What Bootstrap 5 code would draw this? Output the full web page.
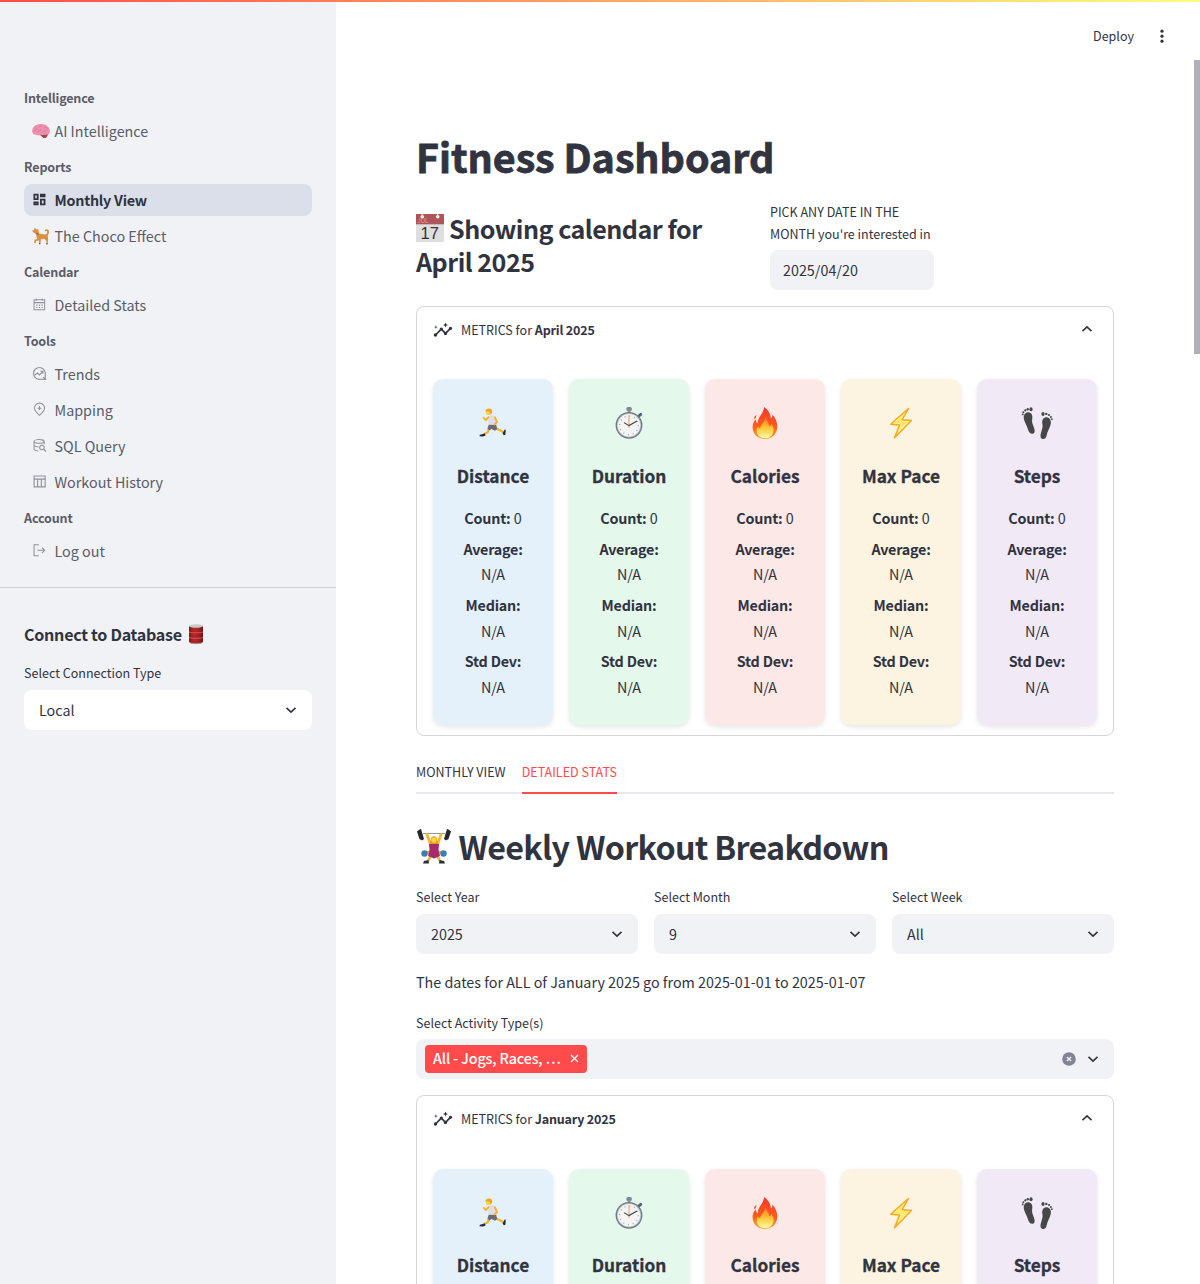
<!DOCTYPE html>
<html lang="en">
<head>
<meta charset="utf-8">
<meta name="viewport" content="width=device-width, initial-scale=1">
<title>Fitness Dashboard</title>
<link href="https://cdn.jsdelivr.net/npm/bootstrap@5.3.0/dist/css/bootstrap.min.css" rel="stylesheet">
<style>
:root{--ink:#31333f;--soft:#f0f2f6;--red:#ff4b4b}
html,body{height:100%;overflow:hidden}
body{font-family:"Noto Sans CJK SC","Noto Sans",sans-serif;color:var(--ink);font-size:14.33px;line-height:25.6px;background:#fff}
h1,h2,h3,h4,p{margin:0}
.topline{height:2px;background:linear-gradient(90deg,#ff4b4b,#fffd80);z-index:5}
.app{height:1284px}
.side{width:336px;background:var(--soft);padding-top:78px}
.side .sect{height:37px;line-height:33px;padding:3px 24px 0;font-size:12.54px;font-weight:600;color:#5a5c67;letter-spacing:-.15px}
.side .nav-link{height:32px;margin:0 24px;padding:0 8px;border-radius:8px;color:#5a5c67;line-height:30px}
.side .nav-link+.nav-link{margin-top:4px}
.side .nav-link.active{background:#dadfea;color:var(--ink);font-weight:600;letter-spacing:-.25px}
.side .nav-link svg{width:15px;height:15px;margin:-1px 7.5px 0 0;color:#8f919b;flex:none}
.side .nav-link.active svg{color:var(--ink)}
.side .nav-link svg.emo{width:18px;height:18px;margin:0 4.5px 0 0}
.rule{height:1px;background:#cbccd2;margin-top:20px}
.dbhead{font-size:16.1px;font-weight:600;line-height:28px;margin-top:32px;letter-spacing:-.28px}
.dbhead svg{margin-left:6px}
.lbl{font-size:12.54px;line-height:22px;display:block}
.conn{margin:14px 0 6px}
.field{height:40px;border-radius:8px;background:var(--soft);padding:0 14px 0 15px;line-height:37px}
.field>span{margin-top:-1px}
.chev{width:14px;height:14px;flex:none}
.up{transform:rotate(180deg);margin-top:-1px}
.main{width:864px;padding:0 86px 0 80px}
.tools{height:60px;padding-top:25px;margin-right:-60px;font-size:12.54px;line-height:22px}
.tools svg{margin-top:-1px}
.title{font-size:39.4px;font-weight:700;line-height:53px;margin-top:69px;-webkit-text-stroke:.8px var(--ink);letter-spacing:-.02px}
.daterow{height:104px;margin-top:20px}
.sub{width:354px;padding-top:10px;font-size:25.07px;font-weight:600;line-height:33.3px;letter-spacing:-.5px}
.cal{width:28px;height:28px;margin-right:5px;vertical-align:-3px;letter-spacing:0}
.picker{width:180px;margin-top:-1px}
.datebox{width:164px;margin-top:5px;padding-left:13px;line-height:40px}
.panel{border:1px solid #d6d6d9;border-radius:8px;height:430px}
.panel-head{height:45px;padding:0 19px 0 16px;font-size:12.54px}
.panel-head b{font-weight:600;letter-spacing:-.2px}
.ins{width:20px;height:20px;margin-right:8px}
.metrics{padding:27px 16px 0;gap:16px}
.metric{flex:1 1 0;height:346px;border-radius:10px;box-shadow:0 2px 5px rgba(0,0,0,.1);text-align:center;padding:26px 15px 0}
.metric svg{width:36px;height:36px;display:block;margin:0 auto}
.metric h4{font-size:17.25px;font-weight:700;line-height:30px;margin:20px -10px 14.2px;-webkit-text-stroke:.3px var(--ink)}
.metric p{margin-bottom:5px}
.metric b{font-weight:600;letter-spacing:-.22px}
.m1{background:#e4f1fa}.m2{background:#e4f8eb}.m3{background:#fce8e7}.m4{background:#fcf3e0}.m5{background:#f2e9f7}
.tabrow{height:42px;border-bottom:2px solid #e6e7ea;gap:16px;margin-top:16px;font-size:12.54px;line-height:40px}
.tabrow a{color:var(--ink);text-decoration:none;height:42px;white-space:nowrap}
.tabrow a.on{color:var(--red);border-bottom:2px solid var(--red)}
.week{font-size:32.24px;font-weight:600;line-height:43px;margin-top:31px;letter-spacing:-.7px}
.lift{width:36px;height:36px;margin:-2px 6.5px 0 0}
.pick{margin:18px 0 6px}
.range{margin-top:15px}
.act{margin:17px 0 5px}
.multi{padding-left:9px}
.chip{background:var(--red);color:#fff;height:28px;border-radius:4px;padding:0 8px;line-height:26px;width:162px;font-weight:500;letter-spacing:-.15px}
.chip span{margin-top:-2px}
.drop{margin-left:10px}
.second{margin-top:16px}
.second .panel-head{height:46px}
.second .metric h4{margin-top:19px}
.thumb{right:0;top:60px;width:6px;height:294px;background:#b0b0b6}
</style>
<script src="https://cdn.jsdelivr.net/npm/bootstrap@5.3.0/dist/js/bootstrap.bundle.min.js"></script>
</head>
<body>
<svg class="position-absolute" width="0" height="0" xmlns="http://www.w3.org/2000/svg">
<defs>
<linearGradient id="gFire" x1="0" y1="0" x2="0" y2="1"><stop offset="0" stop-color="#f5372a"/><stop offset=".6" stop-color="#ff5a1c"/><stop offset="1" stop-color="#ffa61f"/></linearGradient>
<linearGradient id="gCore" x1="0" y1="0" x2="0" y2="1"><stop offset="0" stop-color="#ff7a1e"/><stop offset=".55" stop-color="#ffc93a"/><stop offset="1" stop-color="#fffbb0"/></linearGradient>
<linearGradient id="gCan" x1="0" x2="1" y1="0" y2="0"><stop offset="0" stop-color="#7d1a1c"/><stop offset=".35" stop-color="#b92629"/><stop offset=".7" stop-color="#a91f22"/><stop offset="1" stop-color="#6c1517"/></linearGradient>
</defs>
<symbol id="chev" viewBox="0 0 14 14"><path d="M2.500 4.900 7 9.100l4.500-4.200" fill="none" stroke="#31333f" stroke-width="1.600"/></symbol>
<symbol id="ins" viewBox="0 0 24 24"><path fill="#31333f" d="M21 8c-1.450 0-2.260 1.440-1.930 2.510l-3.550 3.560c-.3-.09-.74-.09-1.040 0l-2.550-2.550C12.270 10.450 11.460 9 10 9c-1.450 0-2.270 1.440-1.930 2.520l-4.560 4.550C2.440 15.740 1 16.550 1 18c0 1.100.9 2 2 2 1.450 0 2.260-1.440 1.930-2.510l4.550-4.560c.3.09.74.09 1.040 0l2.550 2.550C12.730 16.550 13.540 18 15 18c1.450 0 2.270-1.440 1.930-2.520l3.560-3.550C21.560 12.260 23 11.450 23 10c0-1.100-.9-2-2-2zM15 9l.94-2.070L18 6l-2.060-.93L15 3l-.92 2.070L12 6l2.080.93zM3.500 11 4 9l2-.5L4 8l-.5-2L3 8l-2 .5L3 9z"/></symbol>
<symbol id="run" viewBox="0 0 36 36">
<path d="M20 23l5.500 2.500 3 1.700" stroke="#f5b325" stroke-width="2.300" fill="none"/><path d="M14.500 22.500l-2 5-4.500 1.900" stroke="#f5b325" stroke-width="2.200" fill="none"/>
<path d="M27.600 28.500l2.100-4 1 .3-.3 5-1.600.5z" fill="#1f2547"/><path d="M4.400 31.300l.6-1.500 5-1.400.5 2.200-2.500.9z" fill="#1f2547"/>
<path d="M14 19h7l1.200 5-2.200 1.700-3.600-1.700-2 1.500-2-2z" fill="#6b6b73"/>
<path d="M13.600 11.200l4.400-1.300 3 2 .4 8-8.200-.2z" fill="#dcdde6"/>
<path d="M13.400 12.200l-2.400 2.900-2.300-2.300" stroke="#f5b325" stroke-width="1.900" fill="none" stroke-linecap="round"/><path d="M19.900 12.300l2.200 4.700-2.600 2.400" stroke="#f5b325" stroke-width="1.900" fill="none" stroke-linecap="round"/>
<circle cx="13.600" cy="7.400" r="2.700" fill="#ffd04a"/><path d="M10.200 6.200c.3-3 6.500-4 7-.3.200 1.800-.8 2.900-1.700 3.500l-1-3z" fill="#f0a51b"/>
</symbol>
<symbol id="watch" viewBox="0 0 36 36">
<rect x="15.400" y="2" width="5.400" height="4" rx="1.500" fill="#808893"/><path d="M28 10.800l1.800-1.500" stroke="#56606b" stroke-width="2.800" stroke-linecap="round"/>
<rect x="16.600" y="5" width="3" height="4" fill="#8b939c"/>
<circle cx="18" cy="20.300" r="13.400" fill="#717b86"/><circle cx="18" cy="20.300" r="12.100" fill="#b9c0c6"/><circle cx="18" cy="20.300" r="11.200" fill="#f4f4f2"/>
<circle cx="18" cy="20.300" r="9.300" fill="none" stroke="#a5abb0" stroke-width="1.400" stroke-dasharray="1 3.870"/>
<path d="M18 23V10" stroke="#f2a07e" stroke-width="1.100"/><path d="M13 17.600l5 3 8-4.600" stroke="#3d4247" stroke-width="1.100" fill="none"/>
</symbol>
<symbol id="fire" viewBox="0 0 36 36">
<path fill="url(#gFire)" d="M17.300 2c4 3 6.500 7 6.600 11.500 1.200-1 1.700-2.300 1.500-4 3 3.200 5.100 8 4.900 12.500C30 29 25 34 18 34S5.800 29 5.600 22.500c-.1-3.200 1-6 3-8.300.2 2 .9 3.300 2.100 4.200C10.500 12 16 9.500 17.300 2z"/>
<path fill="url(#gCore)" d="M18.500 12c1 4 3.500 6 4 9.500.8-.6 1.500-1.500 1.700-2.500 1.700 2 2.600 4.200 2.300 7-.5 4.500-3.900 7.300-8.500 7.300-4.700 0-8.200-3-8.400-7.300 0-1.800.5-3.500 1.400-4.800.5 1.200 1.200 2 2.100 2.400C13 19 18 17.500 18.500 12z"/>
<path d="M7.500 14.300c-.7-1.500-.3-3 1.800-4.300-.1 1.600-.3 3.200-1.800 4.300z" fill="#f5472a"/>
</symbol>
<symbol id="bolt" viewBox="0 0 36 36"><path d="M25.500 3.500 7.700 19.300l8.900.8-5.100 12.600 16.900-17.300-9.400-.6z" fill="#fff3a0" stroke="#fba919" stroke-width="1.500" stroke-linejoin="round"/><path d="M21.500 9 11 18l8 .9-3.700 7 9.500-9.500-8-.9z" fill="#ffe96d"/></symbol>
<symbol id="feet" viewBox="0 0 36 36"><g fill="#474747">
<path d="M4.800 11c.5-2.800 3.300-4.500 5.700-3.600 2.800 1 3.200 4 2.700 6.500-.6 3 .3 5 1.700 8.500 1.300 3.300 1 5.800-1 6.300-2.100.5-3.900-1-5-4.500C7.600 19.500 4.200 15.500 4.800 11z"/><ellipse cx="12" cy="4.200" rx="1.600" ry="2"/><circle cx="8.700" cy="4.200" r="1.200"/><circle cx="6.300" cy="5.400" r="1.100"/><circle cx="4.300" cy="7.200" r="1"/><circle cx="3.700" cy="9.400" r=".9"/>
<path d="M31.800 16.200c-.5-2.800-3.300-4.500-5.700-3.600-2.800 1-3.200 4-2.700 6.500.6 3-.3 5-1.300 8.400-1 3.300-.8 5.900 1.400 6.400 2.400.5 3.600-1 4.400-4.500 1.200-4.700 4.500-8.700 3.900-12.800z"/><ellipse cx="24" cy="9" rx="1.600" ry="2"/><circle cx="27.300" cy="8.900" r="1.200"/><circle cx="30" cy="10" r="1.100"/><circle cx="31.900" cy="11.900" r="1"/><circle cx="32.800" cy="14.200" r=".9"/></g></symbol>
</svg>

<div class="topline position-absolute top-0 start-0 w-100"></div>
<div class="app d-flex overflow-hidden">
<aside class="side flex-shrink-0">
  <nav class="d-flex flex-column">
    <div class="sect">Intelligence</div>
    <a class="nav-link d-flex align-items-center"><svg class="emo" viewBox="0 0 18 18"><path d="M.2 9.700C-.1 5.700 3 2.200 8.500 2c5-.2 9.500 2.700 9.400 6.900-.1 3-2 4-3.700 4.300l-.8 2.600-2.200-.5-2.200-2.300c-3 .7-8.400-.1-8.800-3.300z" fill="#ef8fae"/><path d="M7.800 12.800l3.200.3 5.200-.6-2.200 3.400-2.700.1z" fill="#a04a4c"/><path d="M2 8.500c2-.2 2.500-1.500 2-3M5.500 9.600c1.500-1.500 3.500-1 4-3M7 4.500c1.500.2 2.500-.3 3-1.500M10.500 10c2-.2 2.500-1.500 4-1.200M12 5.200c1 .8 2.500.5 3.700 1.300" stroke="#d46f93" fill="none" stroke-width=".7"/></svg>AI Intelligence</a>
    <div class="sect">Reports</div>
    <a class="nav-link active d-flex align-items-center"><svg viewBox="0 0 16 16"><path fill="none" stroke="currentColor" stroke-width="1.900" d="M2.500 2.800h3.600v4.800H2.500zM9.500 2.800h3.900v1.900H9.500zM2.500 11h3.600v2.100H2.500zM9.500 8.200h3.900v4.900H9.500z"/></svg>Monthly View</a>
    <a class="nav-link d-flex align-items-center"><svg class="emo" viewBox="0 0 18 18"><path d="M2.500.6l1.700 1.600h2l.8 4.300 6.200 1c1-.2 2-1 2-2.800-.1-1.200-1.400-1.300-1.700-.5l-.9-.5C13.200 1.500 17 1.800 17 4.700c0 1.500-.5 2.500-1.200 3.500l.3 4.500-.4 4.800h-1.600l.4-3.600-2-2-3.500.3-.6 5.300H6.800l.3-4-3 .6-.7 2.300-1.300-.3.400-3.400 2.600-.8L3.900 7 .4 4.800.6 3.500l1.700-.7z" fill="#d79343"/><path d="M4.500 6.300l2 1" stroke="#a33"/><path d="M7 16.500h1.200M14.200 16.700h1.300" stroke="#7a5730"/></svg>The Choco Effect</a>
    <div class="sect">Calendar</div>
    <a class="nav-link d-flex align-items-center"><svg viewBox="0 0 16 16" fill="none" stroke="currentColor" stroke-width="1.100"><path d="M2.200 3h11.300v10.700H2.200zM2.200 6h11.300M4.700 1.500V4M11 1.500V4"/><path d="M4.500 8.600h7M4.500 11.200h7" stroke-dasharray="1.400 1.400" stroke-width="1.200"/></svg>Detailed Stats</a>
    <div class="sect">Tools</div>
    <a class="nav-link d-flex align-items-center"><svg viewBox="0 0 16 16" fill="none" stroke="currentColor" stroke-width="1.200"><path d="M14.200 14.200V8A6.300 6.300 0 1 0 8 14.200h6.200l-2.300-2.400"/><path d="M2.500 10l3.200-2.500 2.300 2 3.500-3.500M8.900 5.600h2.700v2.700"/></svg>Trends</a>
    <a class="nav-link d-flex align-items-center"><svg viewBox="0 0 16 16" fill="none" stroke="currentColor" stroke-width="1.100"><path d="M8 14.200C4.800 11.300 2.600 9 2.600 6.600a5.400 5.400 0 0 1 10.800 0c0 2.400-2.200 4.700-5.400 7.600zM8 4.300v4.600M5.700 6.600h4.600"/></svg>Mapping</a>
    <a class="nav-link d-flex align-items-center"><svg viewBox="0 0 16 16" fill="none" stroke="currentColor" stroke-width="1.100"><ellipse cx="7.600" cy="3.700" rx="5.400" ry="2"/><path d="M2.200 3.700v8.500c.7 1 2.200 1.500 4.500 1.600M2.200 8c.8.900 2.500 1.500 4.800 1.600M13 3.700v3"/><circle cx="10.600" cy="10.200" r="2.400"/><path d="M12.400 12l2.600 2.400"/></svg>SQL Query</a>
    <a class="nav-link d-flex align-items-center"><svg viewBox="0 0 16 16" fill="none" stroke="currentColor" stroke-width="1.200"><path d="M2.200 2.100h11.800v11.600H2.200zM2.200 5.500H14M6 5.500v8.200M10 5.500v8.200"/></svg>Workout History</a>
    <div class="sect">Account</div>
    <a class="nav-link d-flex align-items-center"><svg viewBox="0 0 16 16" fill="none" stroke="currentColor" stroke-width="1.100"><path d="M7.300 1.900H2.200v11.800h5.100M5.800 7.800h7.700M10.600 4.900l2.900 2.900-2.900 2.900"/></svg>Log out</a>
  </nav>
  <div class="rule"></div>
  <div class="px-4">
    <h4 class="d-flex align-items-center dbhead">Connect to Database<svg width="16" height="22" viewBox="0 0 16 22"><path d="M1 3v16c1 2.500 13 2.500 14 0V3z" fill="url(#gCan)"/><ellipse cx="8" cy="3" rx="7" ry="1.800" fill="#c9cac8"/><path d="M1 9c2 1.100 12 1.100 14 0M1 14.500c2 1.100 12 1.100 14 0" stroke="#cf6a69" stroke-width=".8" fill="none"/><path d="M1.200 19.300c2 1.800 11.500 1.800 13.600 0" stroke="#aaa6a4" stroke-width=".8" fill="none"/></svg></h4>
    <label class="lbl conn">Select Connection Type</label>
    <div class="field bg-white d-flex align-items-center justify-content-between"><span>Local</span><svg class="chev"><use href="#chev"/></svg></div>
  </div>
</aside>

<main class="main flex-shrink-0">
  <div class="tools d-flex justify-content-end"><span>Deploy</span><svg width="24" height="24" class="ms-3"><g fill="#31333f"><circle cx="12" cy="7.200" r="1.600"/><circle cx="12" cy="12.200" r="1.600"/><circle cx="12" cy="17.200" r="1.600"/></g></svg></div>
  <h1 class="title">Fitness Dashboard</h1>
  <div class="d-flex daterow">
    <h3 class="sub"><svg class="cal" viewBox="0 0 28 28"><path fill="#dedede" d="M0 0h28v28H0z"/><path fill="#ad5557" d="M0 0h28v10.300H0z"/><circle cx="6.300" cy="2.800" r="1.800" fill="#fff"/><circle cx="21.700" cy="2.800" r="1.800" fill="#fff"/><path d="M6.300 0v3M21.700 0v3" stroke="#eee"/><text x="1.500" y="9.300" font-size="6" font-weight="400" fill="#dba5a6">JUL</text><text x="13.700" y="24.800" text-anchor="middle" font-family="Liberation Sans" font-weight="400" font-size="16.500" fill="#333">17</text></svg>Showing calendar for<br>April 2025</h3>
    <div class="picker"><label class="lbl">PICK ANY DATE IN THE<br>MONTH you're interested in</label><div class="field datebox">2025/04/20</div></div>
  </div>

  <section class="panel">
    <div class="panel-head d-flex align-items-center"><svg class="ins"><use href="#ins"/></svg><span>METRICS for <b>April 2025</b></span><svg class="chev ms-auto up"><use href="#chev"/></svg></div>
    <div class="metrics d-flex">
      <div class="metric m1"><svg><use href="#run"/></svg><h4>Distance</h4><p><b>Count:</b> 0</p><p><b>Average:</b><br>N/A</p><p><b>Median:</b><br>N/A</p><p><b>Std Dev:</b><br>N/A</p></div>
      <div class="metric m2"><svg><use href="#watch"/></svg><h4>Duration</h4><p><b>Count:</b> 0</p><p><b>Average:</b><br>N/A</p><p><b>Median:</b><br>N/A</p><p><b>Std Dev:</b><br>N/A</p></div>
      <div class="metric m3"><svg><use href="#fire"/></svg><h4>Calories</h4><p><b>Count:</b> 0</p><p><b>Average:</b><br>N/A</p><p><b>Median:</b><br>N/A</p><p><b>Std Dev:</b><br>N/A</p></div>
      <div class="metric m4"><svg><use href="#bolt"/></svg><h4>Max Pace</h4><p><b>Count:</b> 0</p><p><b>Average:</b><br>N/A</p><p><b>Median:</b><br>N/A</p><p><b>Std Dev:</b><br>N/A</p></div>
      <div class="metric m5"><svg><use href="#feet"/></svg><h4>Steps</h4><p><b>Count:</b> 0</p><p><b>Average:</b><br>N/A</p><p><b>Median:</b><br>N/A</p><p><b>Std Dev:</b><br>N/A</p></div>
    </div>
  </section>

  <div class="tabrow d-flex"><a>MONTHLY VIEW</a><a class="on">DETAILED STATS</a></div>

  <h2 class="week d-flex align-items-center"><svg class="lift" viewBox="0 0 36 36">
    <path d="M7 5.500h22" stroke="#999" stroke-width="1"/><path d="M1 3.500 3.500 1.500 5 1l3 10-2 1.500-2.500-1.500zM35 3.500 32.500 1.500 31 1l-3 10 2 1.500 2.500-1.500z" fill="#25282b"/>
    <path d="M11 6.500l3.500 10M25 6.500l-3.500 10" stroke="#f7b92f" stroke-width="2.800" stroke-linecap="round"/>
    <path d="M9 25l4-1 2 3-3 6M27 25l-4-1-2 3 3 6" stroke="#f2b02b" stroke-width="2.500" fill="none"/>
    <path d="M13 16h10l-.5 6 1.500 6-6 2.500-6-2.500 1.500-6z" fill="#a72a6c"/>
    <circle cx="8.500" cy="25.500" r="3.200" fill="#3a7fae"/><circle cx="27.500" cy="25.500" r="3.200" fill="#3a7fae"/>
    <path d="M7 35.500l1-2.500 4.500-1 .5 3.500zM29 35.500 28 33l-4.500-1-.5 3.500z" fill="#25303a"/>
    <path d="M14.700 12c-.5-5 7.100-5 6.600 0l1 4h-8.600z" fill="#e09a1c"/><circle cx="18" cy="12" r="2.700" fill="#ffd04a"/></svg><span>Weekly Workout Breakdown</span></h2>

  <div class="d-flex gap-3">
    <div class="flex-fill w-100"><label class="lbl pick">Select Year</label><div class="field d-flex align-items-center justify-content-between"><span>2025</span><svg class="chev"><use href="#chev"/></svg></div></div>
    <div class="flex-fill w-100"><label class="lbl pick">Select Month</label><div class="field d-flex align-items-center justify-content-between"><span>9</span><svg class="chev"><use href="#chev"/></svg></div></div>
    <div class="flex-fill w-100"><label class="lbl pick">Select Week</label><div class="field d-flex align-items-center justify-content-between"><span>All</span><svg class="chev"><use href="#chev"/></svg></div></div>
  </div>
  <p class="range">The dates for ALL of January 2025 go from 2025-01-01 to 2025-01-07</p>
  <label class="lbl act">Select Activity Type(s)</label>
  <div class="field multi d-flex align-items-center">
    <div class="chip d-flex align-items-center justify-content-between"><span>All - Jogs, Races, …</span><svg width="9" height="9" viewBox="0 0 9 9"><path d="M1 1l7 7M8 1 1 8" stroke="#fff" stroke-width="1.300"/></svg></div>
    <svg class="ms-auto" width="14" height="14" viewBox="0 0 14 14"><circle cx="7" cy="7" r="6.800" fill="#808495"/><path d="M4.900 4.900l4.200 4.200M9.100 4.900 4.900 9.100" stroke="#f0f2f6" stroke-width="1.400"/></svg>
    <svg class="chev drop"><use href="#chev"/></svg>
  </div>

  <section class="panel second">
    <div class="panel-head d-flex align-items-center"><svg class="ins"><use href="#ins"/></svg><span>METRICS for <b>January 2025</b></span><svg class="chev ms-auto up"><use href="#chev"/></svg></div>
    <div class="metrics d-flex">
      <div class="metric m1"><svg><use href="#run"/></svg><h4>Distance</h4></div>
      <div class="metric m2"><svg><use href="#watch"/></svg><h4>Duration</h4></div>
      <div class="metric m3"><svg><use href="#fire"/></svg><h4>Calories</h4></div>
      <div class="metric m4"><svg><use href="#bolt"/></svg><h4>Max Pace</h4></div>
      <div class="metric m5"><svg><use href="#feet"/></svg><h4>Steps</h4></div>
    </div>
  </section>
</main>
</div>
<div class="thumb position-absolute"></div>
</body>
</html>
